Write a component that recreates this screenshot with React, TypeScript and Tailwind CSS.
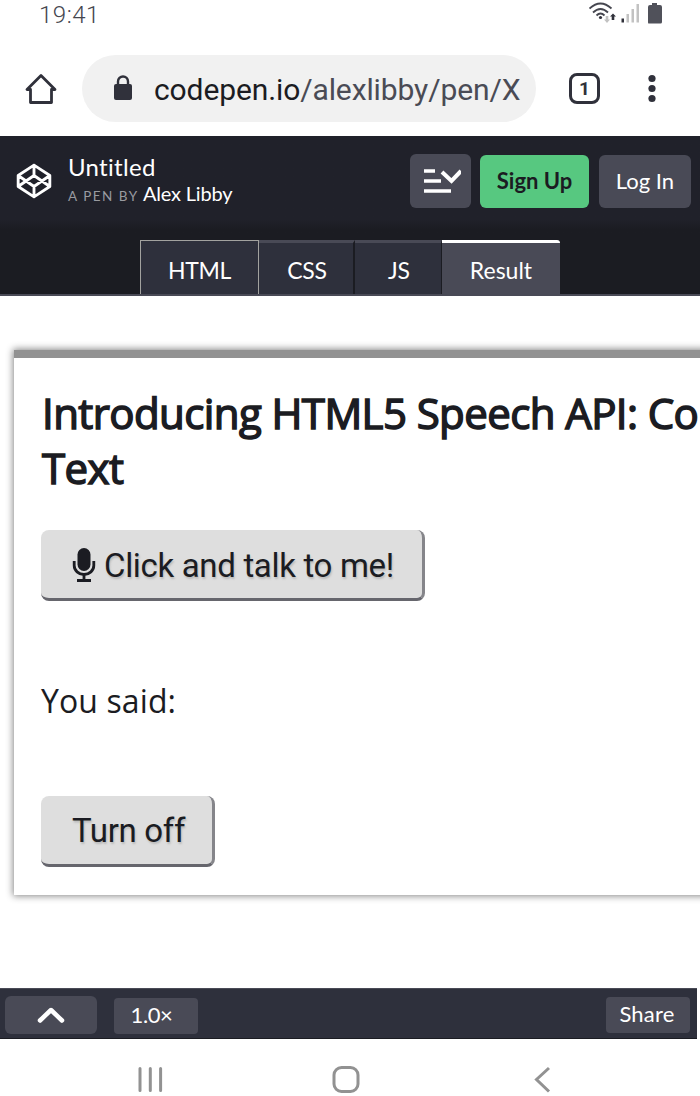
import type { ReactNode } from "react";

function StatusBar() {
  return (
    <div className="flex h-7 items-start justify-between pl-[39px] pr-[37px] font-['Roboto']">
      <span className="mt-[3px] text-[24px] leading-6 font-light tracking-[0.5px] text-[#45464f]">19:41</span>
      <svg width="74" height="24" viewBox="0 0 74 24" fill="none" className="mt-[2px]">
        <g stroke="#45464f" strokeWidth="1.8">
          <path d="M.5 6.500Q11.500-3.500 22.500 6.500" />
          <path d="M4 10.500Q11.500 3.500 19 10.500" />
          <path d="M7.500 13.500Q11.500 9.500 15.500 13.500" />
        </g>
        <circle cx="11.500" cy="15.500" r="1.600" fill="#30313b" />
        <path d="M16.700 14h2.600v3.500h1.700L18 21l-3-3.500h1.700z" fill="#c2c2c2" />
        <path d="M22.700 18h2.600v-3.500H27L24 11.500l-3 3h1.700z" fill="#30313b" />
        <path d="M32.500 16.500h2.500v4h-2.500z" fill="#30313b" />
        <path d="M37.500 12h2.500v8.500h-2.500zM42.500 7h2.500v13.500h-2.500zM47.500 2h2.500v18.500h-2.500z" fill="#c2c2c2" />
        <path d="M63 1h5v2h3q2 0 2 2v15q0 1.500-1.500 1.500h-12Q59 21.500 59 20V5q0-2 2-2h2z" fill="#50515a" />
      </svg>
    </div>
  );
}

function AddressBar() {
  return (
    <div className="flex h-[108px] items-start pt-[27px] font-['Roboto']">
      <svg width="34" height="34" viewBox="0 0 34 34" fill="none" stroke="#30313b" strokeWidth="2.800" className="mt-[17px] ml-6">
        <path d="M3 17.500h3.500V30.500h21V17.500H31L17 3.500z" strokeLinejoin="round" />
      </svg>
      <div className="ml-6 flex h-[67px] w-[454px] items-center rounded-full bg-[#f1f1f1] pl-[31px]">
        <svg width="20" height="26" viewBox="0 0 20 26" fill="none" className="-mt-0.5">
          <path d="M5 11V6.500a5 5 0 0 1 10 0V11" stroke="#30313b" strokeWidth="2.400" />
          <rect x="1" y="9" width="18" height="16" rx="2" fill="#30313b" />
        </svg>
        <span className="mt-0.5 ml-[21px] text-[30px] leading-9 tracking-[-0.110px] whitespace-nowrap text-[#4a4b55]">
          <span className="text-[#1b1c22]">codepen.io</span>/alexlibby/pen/X
        </span>
      </div>
      <div className="mt-[18px] ml-[33px] flex h-[31px] w-[31px] items-center justify-center rounded-lg border-[3px] border-[#30313b] text-[19px] leading-none font-bold text-[#30313b]">
        1
      </div>
      <svg width="8" height="30" viewBox="0 0 8 30" fill="#30313b" className="mt-[19px] ml-12">
        <circle cx="4" cy="4.500" r="3.600" />
        <circle cx="4" cy="14.500" r="3.600" />
        <circle cx="4" cy="24.500" r="3.600" />
      </svg>
    </div>
  );
}

function PenHeader() {
  return (
    <header className="flex h-[104px] items-start bg-linear-to-b from-[#20212a] from-80% to-[#1b1c22] to-90% pt-[18px] pl-[15px] text-white">
      <svg width="38" height="38" viewBox="0 0 24 24" fill="none" stroke="currentColor" strokeWidth="1.800" strokeLinejoin="round" strokeLinecap="round" className="mt-2">
        <path d="M12 2 22 8.500v7L12 22 2 15.500v-7zM12 22v-6.500M22 8.500l-10 7-10-7M2 15.500l10-7 10 7M12 2v6.500" />
      </svg>
      <div className="-mt-px ml-[15px] w-[342px] whitespace-nowrap">
        <div className="text-[24px] leading-[27px] tracking-[0.300px] [font-variant-ligatures:none]">Untitled</div>
        <div className="flex items-baseline leading-[27px]">
          <span className="w-[75px] text-[13.500px] tracking-[1.500px] text-[#999aa0]">A PEN BY</span>
          <span className="text-[20px] tracking-[-0.200px]">Alex Libby</span>
        </div>
      </div>
      <button className="flex h-[54px] w-[61px] items-center justify-center rounded-md bg-[#494a56]">
        <svg width="40" height="28" viewBox="0 0 40 28" fill="none" stroke="white" strokeWidth="3.500">
          <path d="M3 4h11M3 14h17M3 24h27" />
          <path d="m21 5 9.500 9L40 4" strokeWidth="4" />
        </svg>
      </button>
      <button className="mt-px ml-[9px] h-[53px] w-[109px] rounded-md bg-[#57c880] pb-[3px] text-[22px] font-bold text-[#1b1c22]">Sign Up</button>
      <button className="mt-px ml-[10px] h-[53px] w-[92px] rounded-md bg-[#494a56] pb-[3px] text-[22px]">Log In</button>
    </header>
  );
}

function Tabs() {
  return (
    <nav className="flex h-14 justify-center border-b-2 border-[#494a56] bg-[#1b1c22] text-[23px] text-white">
      <div className="flex w-[119px] items-center justify-center border border-b-0 border-[#a2a29f] bg-[#2e303c] pt-[5px] tracking-[-0.300px]">HTML</div>
      <div className="flex w-24 items-center justify-center border-t-[3px] border-r-2 border-t-[#494a56] border-r-[#1b1c22] bg-[#2e303c] pt-[3px] pl-[2px] tracking-[-0.200px]">CSS</div>
      <div className="flex w-[87px] items-center justify-center border-t-[3px] border-r border-t-[#494a56] border-r-[#1b1c22] bg-[#2e303c] pt-[3px] pl-[2px]">JS</div>
      <div className="flex w-[118px] items-center justify-center rounded-tr-[3px] border-t-[3px] border-white bg-[#494a56] pt-[3px]">Result</div>
    </nav>
  );
}

function PageButton({ children, className }: { children: ReactNode; className: string }) {
  return (
    <button
      className={`flex items-center rounded-[8px] border-r-[3px] border-b-[3px] border-r-[#85858a] border-b-[#66666d] bg-[#dedede] pl-[31px] font-['Roboto'] tracking-[-0.330px] whitespace-nowrap [text-shadow:1px_2px_2px_#bbb] ${className}`}
    >
      {children}
    </button>
  );
}

function Result() {
  return (
    <main className="h-[692px] overflow-hidden pt-[54px] pl-[14px] text-[#1b1c22]">
      <section className="h-[545px] w-[720px] border-t-8 border-[#929292] bg-white pl-[27px] shadow-[0_0_7px_1px_#888]">
        <h1 className="pt-[27px] pl-px font-['Open_Sans'] text-[42px] leading-[55px] font-normal tracking-[-0.590px] whitespace-nowrap [-webkit-text-stroke:1.500px_#1b1c22]">
          Introducing HTML5 Speech API: Co
          <br />
          Text
        </h1>
        <PageButton className="mt-[35px] h-[71px] w-[384px] pt-[3px] text-[33px]">
          <svg width="24" height="36" viewBox="0 0 24 36" fill="none" stroke="#1b1c22" className="mr-2 -mt-0.5">
            <rect x="5.500" y="1" width="13" height="23" rx="6.500" fill="#1b1c22" stroke="none" />
            <path d="M2.200 14v4.500a9.800 9 0 0 0 19.600 0V14M12 27.500v5M5 33.500h14" strokeWidth="2.800" />
          </svg>
          Click and talk to me!
        </PageButton>
        <p className="mt-[76px] font-['Open_Sans'] text-[32px] leading-[48px] tracking-[0.100px]">You said:</p>
        <PageButton className="mt-[71px] h-[71px] w-[174px] pt-px text-[33px]">Turn off</PageButton>
      </section>
    </main>
  );
}

function PenFooter() {
  return (
    <footer className="flex h-[51px] w-[697px] items-start border-y border-t-[#494a56] border-b-[#1b1c22] bg-[#2e303c] pt-[7px] pl-[5px] text-[22px] text-white">
      <button className="flex h-[38px] w-[92px] items-center justify-center rounded-md bg-[#494a56]">
        <svg width="28" height="18" viewBox="0 0 28 18" fill="none" stroke="white" strokeWidth="4.500" strokeLinecap="round" strokeLinejoin="round">
          <path d="M3 14.500 14 4l11 10.500" />
        </svg>
      </button>
      <button className="mt-[2px] ml-[17px] h-9 w-[84px] rounded-sm bg-[#494a56] pr-[9px] pb-[3px] leading-none tracking-[-0.400px]">1.0×</button>
      <button className="mt-px mr-[7px] ml-auto h-9 w-[84px] rounded-sm bg-[#494a56] pr-[2px] pb-[2px] leading-none tracking-[0.200px]">Share</button>
    </footer>
  );
}

function SystemNav() {
  return (
    <div className="flex h-[57px] items-start pt-[27px] pl-[138px]">
      <svg width="26" height="28" viewBox="0 0 26 28" stroke="#929292" strokeWidth="3" strokeLinecap="round">
        <path d="M2 2.500v22M12.300 2.500v22M22.600 2.500v22" />
      </svg>
      <svg width="30" height="30" viewBox="0 0 30 30" fill="none" stroke="#929292" strokeWidth="3" className="ml-[167px]">
        <rect x="3" y="1.500" width="24" height="24" rx="7.500" />
      </svg>
      <svg width="20" height="30" viewBox="0 0 20 30" fill="none" stroke="#929292" strokeWidth="3" className="ml-[171px]">
        <path d="M17 2 4.500 13.500 17 25.500" />
      </svg>
    </div>
  );
}

export default function App() {
  return (
    <div className="h-[1096px] w-[700px] overflow-hidden bg-white font-['Lato',sans-serif]">
      <StatusBar />
      <AddressBar />
      <PenHeader />
      <Tabs />
      <Result />
      <PenFooter />
      <SystemNav />
    </div>
  );
}
